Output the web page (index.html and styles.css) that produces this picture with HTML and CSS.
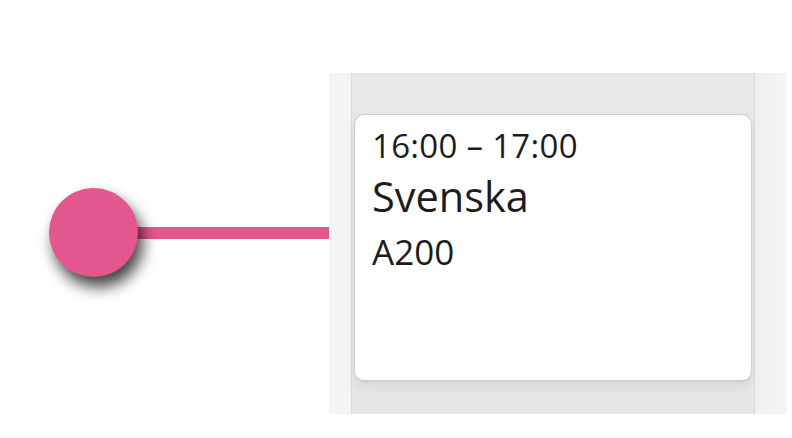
FILE: index.html
```html
<!DOCTYPE html>
<html lang="sv">
<head>
    <meta charset="UTF-8">
    <meta name="viewport" content="width=device-width, initial-scale=1.0">
    <title>Schema</title>
    <link rel="stylesheet" href="styles.css">
</head>
<body>
    <div class="schema">
        <div class="tidslinje">
            <div class="punkt"></div>
            <div class="linje"></div>
        </div>

        <div class="dag">
            <div class="kant"></div>
            <div class="kolumn">
                <div class="lektion">
                    <div class="tid">16:00 – 17:00</div>
                    <div class="amne">Svenska</div>
                    <div class="sal">A200</div>
                </div>
            </div>
            <div class="kant hoger"></div>
        </div>
    </div>
</body>
</html>
```

FILE: styles.css
```css
body {
    font-family: 'Open Sans', 'Noto Sans', sans-serif;
    margin: 0;
    padding: 0;
    background: #ffffff;
    color: #1c1c1c;
}
.schema {
    display: flex;
    align-items: flex-start;
    height: 438px;
    overflow: hidden;
}
.tidslinje {
    width: 329px;
    flex-shrink: 0;
    display: flex;
    align-items: center;
    padding-top: 188px;
    padding-left: 49px;
    box-sizing: border-box;
}
.punkt {
    width: 89px;
    height: 89px;
    border-radius: 50%;
    background: #e4568e;
    box-shadow: 5px 10px 15px rgba(0, 0, 0, 0.75);
    flex-shrink: 0;
    position: relative;
    z-index: 1;
}
.linje {
    flex: 1;
    height: 12px;
    background: #e4568e;
    margin-left: -2px;
}
.dag {
    display: flex;
    margin-top: 73px;
    width: 458px;
    height: 341px;
}
.kant {
    width: 22px;
    background: #f4f4f4;
}
.kant.hoger {
    flex: 1;
    background: linear-gradient(90deg, #efefef, #f6f6f6);
}
.kolumn {
    width: 404px;
    background: linear-gradient(180deg, #e8e8e6 0%, #e8e8e6 90%, #e6e6e4 100%);
    border-left: 1px solid #dadada;
    border-right: 1px solid #dadada;
    padding: 41px 2px 0 2px;
    box-sizing: border-box;
}
.lektion {
    height: 268px;
    background: #ffffff;
    border: 1px solid #cdcdcd;
    border-bottom-width: 2px;
    border-radius: 10px;
    box-shadow: 0 5px 12px rgba(0, 0, 0, 0.08);
    padding: 7px 17px 0 17px;
    box-sizing: border-box;
}
.tid {
    font-size: 33px;
    line-height: 48px;
    letter-spacing: 0.3px;
}
.amne {
    font-size: 41.5px;
    line-height: 53px;
}
.sal {
    font-size: 35px;
    line-height: 57px;
}
```
